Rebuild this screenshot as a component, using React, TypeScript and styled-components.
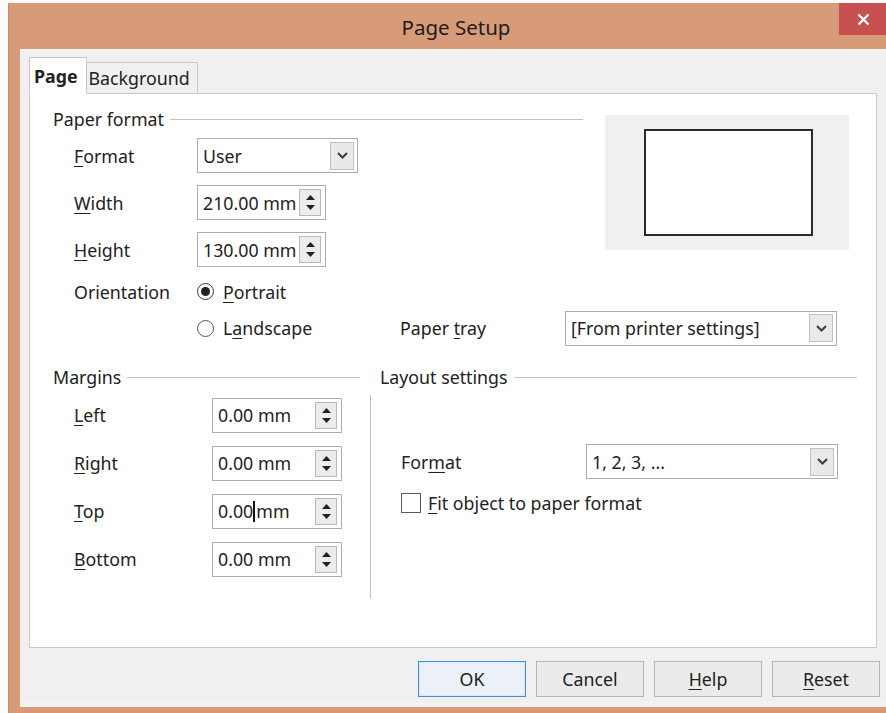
import React, { ReactNode } from 'react';
import styled, { createGlobalStyle } from 'styled-components';

const FONT = '17.8px';

const GlobalStyle = createGlobalStyle`
  html, body {
    margin: 0;
    padding: 0;
    background: #fbfbfb;
    overflow: hidden;
  }
  body {
    font-family: "Noto Sans", "Open Sans", sans-serif;
    color: #222;
  }
`;

// window chrome
const Window = styled.div`
  margin: 3px 0 0 8px;
  width: 894px;
  background: #d89b7a;
  border-left: 1px solid #c4876a;
  display: flex;
  flex-direction: column;
`;

const TitleBar = styled.div`
  height: 46px;
  display: grid;
  grid-template-columns: 1fr auto 1fr;
  align-items: start;
`;

const TitleText = styled.div`
  grid-column: 2;
  padding-top: 10px;
  font-size: 20.5px;
  line-height: 28px;
  color: #1c1c1c;
`;

const CloseButton = styled.div`
  grid-column: 3;
  justify-self: end;
  margin-right: 16px;
  width: 48px;
  height: 32px;
  background: #c75050;
  display: flex;
  align-items: center;
  justify-content: center;
`;

const Client = styled.div`
  margin: 0 11px 0 11px;
  background: #f0f0f0;
  padding: 8px 0 10px 9px;
  border-bottom: 6px solid #d89b7a;
  box-shadow: inset 0 -5px 0 #f6f2ef;
`;

// tabs
const TabBar = styled.div`
  display: flex;
  align-items: flex-end;
  height: 36px;
`;

const Tab = styled.div<{ $active?: boolean }>`
  position: relative;
  z-index: ${(p) => (p.$active ? 2 : 1)};
  height: ${(p) => (p.$active ? '37px' : '32px')};
  margin-bottom: -1px;
  padding: 0 ${(p) => (p.$active ? '8px 0 4px' : '7px 0 2px')};
  box-sizing: border-box;
  border: 1px solid #c9c9c9;
  border-bottom-color: ${(p) => (p.$active ? '#fff' : '#c9c9c9')};
  border-left-width: ${(p) => (p.$active ? '1px' : '0')};
  background: ${(p) => (p.$active ? '#fff' : '#f0f0f0')};
  font-size: ${FONT};
  font-weight: ${(p) => (p.$active ? 700 : 400)};
  line-height: 30px;
  display: flex;
  align-items: center;
`;

const Panel = styled.div`
  width: 848px;
  height: 555px;
  box-sizing: border-box;
  background: #fff;
  border: 1px solid #c9c9c9;
  padding-left: 23px;
  display: flex;
  flex-direction: column;
`;

// section heading with a rule running to the right
const Heading = styled.div<{ $indent?: number }>`
  display: flex;
  align-items: center;
  height: 24px;
  padding-left: ${(p) => p.$indent ?? 0}px;
  font-size: ${FONT};
  white-space: nowrap;
  &::after {
    content: '';
    flex: 1;
    height: 1px;
    margin-left: 6px;
    background: #c3c3c3;
  }
`;

const PaperTop = styled.div`
  display: flex;
  align-items: flex-start;
`;

const PaperFields = styled.div`
  width: 530px;
  margin-top: 13px;
  display: flex;
  flex-direction: column;
`;

const FieldRow = styled.div<{ $labelWidth: number; $gap?: number; $indent?: number }>`
  display: flex;
  align-items: center;
  height: 35px;
  margin-top: ${(p) => p.$gap ?? 12}px;
  padding-left: ${(p) => p.$indent ?? 21}px;
  & > label {
    width: ${(p) => p.$labelWidth}px;
    flex: none;
  }
`;

const Label = styled.label`
  font-size: ${FONT};
  white-space: nowrap;
`;

const U = styled.span`
  text-decoration: underline;
  text-underline-offset: 3px;
  text-decoration-thickness: 1px;
`;

const Preview = styled.div`
  margin: 21px 0 0 22px;
  width: 244px;
  height: 135px;
  background: #f0f0f0;
  display: flex;
  align-items: center;
  justify-content: center;
  padding-left: 2px;
  box-sizing: border-box;
`;

const PreviewSheet = styled.div`
  width: 169px;
  height: 107px;
  box-sizing: border-box;
  background: #fff;
  border: 2px solid #2b2b2b;
`;

const TrayRow = styled.div`
  display: grid;
  grid-template-columns: 144px 203px 165px 272px;
  align-items: center;
  height: 36px;
  margin-top: 1px;
`;

// inputs
const Combo = styled.div<{ $width: number }>`
  width: ${(p) => p.$width}px;
  height: 35px;
  box-sizing: border-box;
  border: 1px solid #acacac;
  background: #fff;
  display: flex;
  align-items: center;
  padding: 0 3px 0 5px;
  font-size: ${FONT};
`;

const ComboValue = styled.span`
  flex: 1;
  white-space: nowrap;
`;

const ArrowButton = styled.div`
  width: 24px;
  height: 28px;
  box-sizing: border-box;
  border: 1px solid #c2c2c2;
  background: #e9e9e9;
  display: flex;
  align-items: center;
  justify-content: center;
`;

const SpinBox = styled.div<{ $width: number }>`
  width: ${(p) => p.$width}px;
  height: 35px;
  box-sizing: border-box;
  border: 1px solid #acacac;
  background: #fff;
  display: flex;
  align-items: center;
  padding: 0 4px 0 5px;
  font-size: ${FONT};
`;

const SpinButton = styled.div`
  width: 22px;
  height: 27px;
  box-sizing: border-box;
  border: 1px solid #b9b9b9;
  background: #ececec;
  display: flex;
  flex-direction: column;
  align-items: center;
  justify-content: space-evenly;
`;

const Caret = styled.span`
  display: inline-block;
  width: 2px;
  height: 21px;
  margin: 0 1px 0 0;
  background: #111;
  vertical-align: -4px;
`;

const RadioItem = styled.div`
  display: flex;
  align-items: center;
  gap: 9px;
  font-size: ${FONT};
`;

const RadioDot = styled.span<{ $checked?: boolean }>`
  width: 17px;
  height: 17px;
  box-sizing: border-box;
  border-radius: 50%;
  border: 1px solid ${(p) => (p.$checked ? '#3a3a3a' : '#555')};
  background: #fff;
  display: flex;
  align-items: center;
  justify-content: center;
  &::after {
    content: '';
    width: 9px;
    height: 9px;
    border-radius: 50%;
    background: ${(p) => (p.$checked ? '#222' : 'transparent')};
  }
`;

// lower half: margins and layout settings
const LowerSection = styled.div`
  display: flex;
  margin-top: 19px;
`;

const MarginsColumn = styled.div`
  width: 307px;
  display: flex;
  flex-direction: column;
`;

const LayoutColumn = styled.div`
  width: 487px;
  margin-left: 10px;
  display: flex;
  flex-direction: column;
`;

const LayoutBody = styled.div`
  margin-top: 6px;
  height: 204px;
  border-left: 1px solid #c3c3c3;
  padding: 49px 0 0 30px;
  box-sizing: border-box;
  display: flex;
  flex-direction: column;
`;

const CheckRow = styled.div`
  display: flex;
  align-items: center;
  gap: 7px;
  margin-top: 12px;
  font-size: ${FONT};
`;

const CheckBox = styled.span`
  width: 20px;
  height: 20px;
  box-sizing: border-box;
  border: 1px solid #5a5a5a;
  background: #fff;
`;

const MarginRow = styled(FieldRow)`
  height: 36px;
`;

// dialog buttons
const ButtonBar = styled.div`
  width: 851px;
  margin-top: 13px;
  display: flex;
  justify-content: flex-end;
  gap: 10px;
`;

const DialogButton = styled.div<{ $default?: boolean }>`
  width: 108px;
  height: 36px;
  box-sizing: border-box;
  border: 1px solid ${(p) => (p.$default ? '#4a8fd0' : '#b5b5b5')};
  box-shadow: ${(p) => (p.$default ? 'inset 0 0 0 1px #d6e8f8' : 'none')};
  background: ${(p) => (p.$default ? '#ebf1f7' : '#ebebeb')};
  display: flex;
  align-items: center;
  justify-content: center;
  font-size: ${FONT};
`;

const Chevron = () => (
  <svg width="11" height="7" viewBox="0 0 11 7">
    <polyline points="1,1 5.5,5.5 10,1" fill="none" stroke="#3d3d3d" strokeWidth="2" />
  </svg>
);

const Spinner = () => (
  <SpinButton>
    <svg width="9" height="5" viewBox="0 0 9 5">
      <polygon points="0,5 4.5,0 9,5" fill="#222" />
    </svg>
    <svg width="9" height="5" viewBox="0 0 9 5">
      <polygon points="0,0 4.5,5 9,0" fill="#222" />
    </svg>
  </SpinButton>
);

const Dropdown: React.FC<{ width: number; children: ReactNode }> = ({ width, children }) => (
  <Combo $width={width}>
    <ComboValue>{children}</ComboValue>
    <ArrowButton>
      <Chevron />
    </ArrowButton>
  </Combo>
);

const Spin: React.FC<{ width: number; children: ReactNode }> = ({ width, children }) => (
  <SpinBox $width={width}>
    <ComboValue>{children}</ComboValue>
    <Spinner />
  </SpinBox>
);

const margins: { key: string; rest: string; value?: ReactNode }[] = [
  { key: 'L', rest: 'eft' },
  { key: 'R', rest: 'ight' },
  { key: 'T', rest: 'op', value: <>0.00<Caret />mm</> },
  { key: 'B', rest: 'ottom' },
];

export default function App() {
  return (
    <>
      <GlobalStyle />
      <Window>
        <TitleBar>
          <TitleText>Page Setup</TitleText>
          <CloseButton>
            <svg width="13" height="13" viewBox="0 0 13 13">
              <path d="M1.5 1.5 L11.5 11.5 M11.5 1.5 L1.5 11.5" stroke="#fff" strokeWidth="2.4" />
            </svg>
          </CloseButton>
        </TitleBar>
        <Client>
          <TabBar>
            <Tab $active>Page</Tab>
            <Tab>Background</Tab>
          </TabBar>
          <Panel>
            <PaperTop>
              <PaperFields>
                <Heading>Paper format</Heading>
                <FieldRow $labelWidth={123} $gap={7}>
                  <Label><U>F</U>ormat</Label>
                  <Dropdown width={161}>User</Dropdown>
                </FieldRow>
                <FieldRow $labelWidth={123}>
                  <Label><U>W</U>idth</Label>
                  <Spin width={129}>210.00 mm</Spin>
                </FieldRow>
                <FieldRow $labelWidth={123}>
                  <Label><U>H</U>eight</Label>
                  <Spin width={129}>130.00 mm</Spin>
                </FieldRow>
                <FieldRow $labelWidth={123} $gap={7}>
                  <Label>Orientation</Label>
                  <RadioItem>
                    <RadioDot $checked />
                    <span><U>P</U>ortrait</span>
                  </RadioItem>
                </FieldRow>
              </PaperFields>
              <Preview>
                <PreviewSheet />
              </Preview>
            </PaperTop>
            <TrayRow>
              <span />
              <RadioItem>
                <RadioDot />
                <span>L<U>a</U>ndscape</span>
              </RadioItem>
              <Label>Paper <U>t</U>ray</Label>
              <Dropdown width={272}>[From printer settings]</Dropdown>
            </TrayRow>
            <LowerSection>
              <MarginsColumn>
                <Heading>Margins</Heading>
                {margins.map((m, i) => (
                  <MarginRow key={m.key} $labelWidth={138} $gap={i === 0 ? 8 : 12}>
                    <Label><U>{m.key}</U>{m.rest}</Label>
                    <Spin width={130}>{m.value ?? '0.00 mm'}</Spin>
                  </MarginRow>
                ))}
              </MarginsColumn>
              <LayoutColumn>
                <Heading $indent={10}>Layout settings</Heading>
                <LayoutBody>
                  <FieldRow $labelWidth={185} $gap={0} $indent={0}>
                    <Label>For<U>m</U>at</Label>
                    <Dropdown width={252}>1, 2, 3, ...</Dropdown>
                  </FieldRow>
                  <CheckRow>
                    <CheckBox />
                    <span><U>F</U>it object to paper format</span>
                  </CheckRow>
                </LayoutBody>
              </LayoutColumn>
            </LowerSection>
          </Panel>
          <ButtonBar>
            <DialogButton $default>OK</DialogButton>
            <DialogButton>Cancel</DialogButton>
            <DialogButton><span><U>H</U>elp</span></DialogButton>
            <DialogButton><span><U>R</U>eset</span></DialogButton>
          </ButtonBar>
        </Client>
      </Window>
    </>
  );
}
